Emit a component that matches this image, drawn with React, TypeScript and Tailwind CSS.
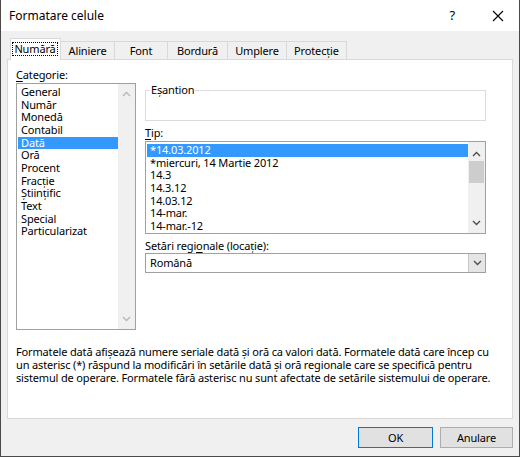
import React from "react";

function ChevUp({ c }: { c: string }) {
  return (
    <svg width="9" height="6" viewBox="0 0 9 6">
      <path d="M1 5 L4.5 1.5 L8 5" stroke={c} strokeWidth="1.4" fill="none" />
    </svg>
  );
}
function ChevDown({ c }: { c: string }) {
  return (
    <svg width="9" height="6" viewBox="0 0 9 6">
      <path d="M1 1 L4.5 4.5 L8 1" stroke={c} strokeWidth="1.4" fill="none" />
    </svg>
  );
}

const categories = [
  "General",
  "Număr",
  "Monedă",
  "Contabil",
  "Dată",
  "Oră",
  "Procent",
  "Fracție",
  "Științific",
  "Text",
  "Special",
  "Particularizat",
];

const types = [
  "*14.03.2012",
  "*miercuri, 14 Martie 2012",
  "14.3",
  "14.3.12",
  "14.03.12",
  "14-mar.",
  "14-mar.-12",
];

const tabs = [
  { label: "Aliniere", w: "w-[54px]" },
  { label: "Font", w: "w-[53px]" },
  { label: "Bordură", w: "w-[60px]" },
  { label: "Umplere", w: "w-[59px]" },
  { label: "Protecție", w: "w-[60px]" },
];

export default function App() {
  return (
    <div className="w-[520px] h-[457px] bg-[#f0f0f0] border-x border-b border-[#4a4a4a] flex flex-col text-[11px] tracking-[-0.15px] text-black font-['Noto_Sans',sans-serif] overflow-hidden">
      {/* Title bar */}
      <div className="h-[31px] bg-white flex items-center pl-[8px] shrink-0">
        <span className="flex-1 text-[12px] tracking-normal">Formatare celule</span>
        <span className="text-[13px] mr-[37px]">?</span>
        <svg width="12" height="12" viewBox="0 0 12 12" className="mr-[15px]">
          <path d="M1 1 L11 11 M11 1 L1 11" stroke="#000" strokeWidth="1.1" />
        </svg>
      </div>

      {/* Tabs */}
      <div className="flex items-end pl-[9px] h-[28px] shrink-0">
        <div className="relative z-10 -mb-px w-[51px] h-[22px] bg-white border border-b-0 border-[#d9d9d9] flex items-start pt-[3px] pl-[1px]">
          <div className="w-[46px] h-[14px] border border-dotted border-[#000] flex items-center justify-center leading-[12px]">
            Numără
          </div>
        </div>
        {tabs.map((t) => (
          <div
            key={t.label}
            className={`${t.w} h-[18px] border-t border-r border-[#d9d9d9] flex items-center justify-center leading-[12px]`}
          >
            {t.label}
          </div>
        ))}
      </div>

      {/* Panel */}
      <div className="ml-[6px] w-[506px] h-[360px] bg-white border border-[#d9d9d9] flex flex-col shrink-0">
        <div className="flex">
          {/* Left column */}
          <div className="ml-[8px] w-[120px] flex flex-col">
            <div className="mt-[8px] h-[13px] leading-[13px]">
              <span className="underline underline-offset-2">C</span>ategorie:
            </div>
            <div className="mt-[2px] h-[247px] border border-[#a0a0a0] flex">
              <div className="flex-1 pt-[2px] pl-[1px]">
                {categories.map((c) => (
                  <div
                    key={c}
                    className={`h-[12.67px] leading-[12.67px] pl-[3px] ${
                      c === "Dată" ? "bg-[#3399ff] text-white" : ""
                    }`}
                  >
                    {c}
                  </div>
                ))}
              </div>
              <div className="w-[17px] bg-[#f0f0f0] flex flex-col items-center justify-between pt-[7px] pb-[7px]">
                <ChevUp c="#b8b8b8" />
                <ChevDown c="#b8b8b8" />
              </div>
            </div>
          </div>

          {/* Right column */}
          <div className="ml-[9px] w-[341px] flex flex-col">
            <div className="relative mt-[30px] h-[31px] border border-[#dcdcdc]">
              <span className="absolute left-[4px] -top-[8px] bg-white px-[1px] leading-[13px]">
                Eșantion
              </span>
            </div>
            <div className="mt-[5px] h-[13px] leading-[13px]">
              <span className="underline underline-offset-2">T</span>ip:
            </div>
            <div className="mt-[2px] h-[93px] border border-[#a0a0a0] flex overflow-hidden">
              <div className="flex-1 pt-[2px] pl-[1px]">
                {types.map((t, i) => (
                  <div
                    key={t}
                    className={`h-[12.67px] leading-[12.67px] pl-[3px] ${
                      i === 0 ? "bg-[#3399ff] text-white" : ""
                    }`}
                  >
                    {t}
                  </div>
                ))}
              </div>
              <div className="w-[17px] bg-[#f0f0f0] flex flex-col items-center pt-[9px] pb-[7px]">
                <ChevUp c="#505050" />
                <div className="mt-[4px] w-[15px] h-[22px] bg-[#cdcdcd]" />
                <div className="flex-1" />
                <ChevDown c="#505050" />
              </div>
            </div>
            <div className="mt-[5px] h-[13px] leading-[13px]">
              Setări regi<span className="underline underline-offset-2">o</span>nale (locație):
            </div>
            <div className="mt-[1px] h-[20px] border border-[#a0a0a0] flex items-stretch">
              <div className="flex-1 pl-[4px] flex items-center leading-[12px]">Română</div>
              <div className="w-[17px] bg-[#e5e5e5] border-l border-[#c8c8c8] flex items-center justify-center">
                <ChevDown c="#505050" />
              </div>
            </div>
          </div>
        </div>

        <div className="ml-[8px] mt-[15px] leading-[13px] whitespace-nowrap">
          <div>
            Formatele dată afișează numere seriale dată și oră ca valori dată. Formatele dată care încep cu
          </div>
          <div>
            un asterisc (*) răspund la modificări în setările dată și oră regionale care se specifică pentru
          </div>
          <div>
            sistemul de operare. Formatele fără asterisc nu sunt afectate de setările sistemului de operare.
          </div>
        </div>
      </div>

      {/* Buttons */}
      <div className="flex justify-end gap-[7px] pr-[6px] mt-[8px]">
        <div className="w-[75px] h-[21px] bg-[#e1e1e1] border border-[#0078d7] flex items-center justify-center leading-[12px]">
          OK
        </div>
        <div className="w-[73px] h-[21px] bg-[#e1e1e1] border border-[#adadad] flex items-center justify-center leading-[12px]">
          Anulare
        </div>
      </div>
    </div>
  );
}
